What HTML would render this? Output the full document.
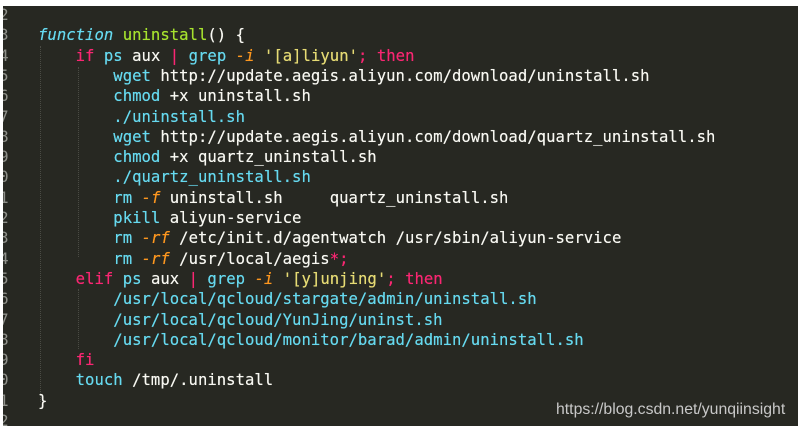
<!DOCTYPE html>
<html><head><meta charset="utf-8"><style>
html,body{margin:0;padding:0;background:#fff;width:798px;height:430px;overflow:hidden}
#ed{position:absolute;left:3px;top:6px;width:795px;height:420px;background:#272822;overflow:hidden}
.l{position:absolute;left:35px;height:20px;line-height:20px;white-space:pre;font-family:"DejaVu Sans Mono","Liberation Mono",monospace;font-size:15.6px;color:#f8f8f2;letter-spacing:0.02px;text-shadow:0 0 0.4px currentColor}
.n{position:absolute;left:-4px;height:20px;line-height:20px;font-family:"DejaVu Sans Mono",monospace;font-size:16px;color:#8f908a}
.k{color:#f92672}.c{color:#66d9ef}.i{font-style:italic}.g{color:#a6e22e}.s{color:#e6db74}.o{color:#fd971f;font-style:italic}
.gd{position:absolute;width:0;border-left:1px dotted #4a4b44}
#wm{position:absolute;left:553px;top:395px;font-family:"Liberation Sans",sans-serif;font-size:15.8px;color:#c8c8c8}
</style></head><body><div id="ed">
<div class="gd" style="left:37px;top:40px;height:356px"></div>
<div class="gd" style="left:75px;top:61px;height:190px"></div>
<div class="gd" style="left:75px;top:283px;height:60px"></div>
<div class="n" style="top:-1px">2</div>
<div class="n" style="top:19.3px">3</div>
<div class="n" style="top:39.6px">4</div>
<div class="n" style="top:59.9px">5</div>
<div class="n" style="top:80.2px">6</div>
<div class="n" style="top:100.5px">7</div>
<div class="n" style="top:120.8px">8</div>
<div class="n" style="top:141.1px">9</div>
<div class="n" style="top:161.4px">0</div>
<div class="n" style="top:181.7px">1</div>
<div class="n" style="top:202px">2</div>
<div class="n" style="top:222.3px">3</div>
<div class="n" style="top:242.6px">4</div>
<div class="n" style="top:262.9px">5</div>
<div class="n" style="top:283.2px">6</div>
<div class="n" style="top:303.5px">7</div>
<div class="n" style="top:323.8px">8</div>
<div class="n" style="top:344.1px">9</div>
<div class="n" style="top:364.4px">0</div>
<div class="n" style="top:384.7px">1</div>
<div class="n" style="top:405px">2</div>
<div class="l" style="top:19.3px"><span class="c i">function</span> <span class="g">uninstall</span>() {</div>
<div class="l" style="top:39.6px">    <span class="k">if</span> <span class="c">ps</span> aux <span class="k">|</span> <span class="c">grep</span> <span class="o">-i</span> <span class="s">'[a]liyun'</span><span class="k">;</span> <span class="k">then</span></div>
<div class="l" style="top:59.9px">        <span class="c">wget</span> http://update.aegis.aliyun.com/download/uninstall.sh</div>
<div class="l" style="top:80.2px">        <span class="c">chmod</span> +x uninstall.sh</div>
<div class="l" style="top:100.5px">        <span class="c">./uninstall.sh</span></div>
<div class="l" style="top:120.8px">        <span class="c">wget</span> http://update.aegis.aliyun.com/download/quartz_uninstall.sh</div>
<div class="l" style="top:141.1px">        <span class="c">chmod</span> +x quartz_uninstall.sh</div>
<div class="l" style="top:161.4px">        <span class="c">./quartz_uninstall.sh</span></div>
<div class="l" style="top:181.7px">        <span class="c">rm</span> <span class="o">-f</span> uninstall.sh     quartz_uninstall.sh</div>
<div class="l" style="top:202px">        <span class="c">pkill</span> aliyun-service</div>
<div class="l" style="top:222.3px">        <span class="c">rm</span> <span class="o">-rf</span> /etc/init.d/agentwatch /usr/sbin/aliyun-service</div>
<div class="l" style="top:242.6px">        <span class="c">rm</span> <span class="o">-rf</span> /usr/local/aegis<span class="k">*;</span></div>
<div class="l" style="top:262.9px">    <span class="k">elif</span> <span class="c">ps</span> aux <span class="k">|</span> <span class="c">grep</span> <span class="o">-i</span> <span class="s">'[y]unjing'</span><span class="k">;</span> <span class="k">then</span></div>
<div class="l" style="top:283.2px">        <span class="c">/usr/local/qcloud/stargate/admin/uninstall.sh</span></div>
<div class="l" style="top:303.5px">        <span class="c">/usr/local/qcloud/YunJing/uninst.sh</span></div>
<div class="l" style="top:323.8px">        <span class="c">/usr/local/qcloud/monitor/barad/admin/uninstall.sh</span></div>
<div class="l" style="top:344.1px">    <span class="k">fi</span></div>
<div class="l" style="top:364.4px">    <span class="c">touch</span> /tmp/.uninstall</div>
<div class="l" style="top:384.7px">}</div>
<div id="wm">https://blog.csdn.net/yunqiinsight</div>
</div></body></html>
